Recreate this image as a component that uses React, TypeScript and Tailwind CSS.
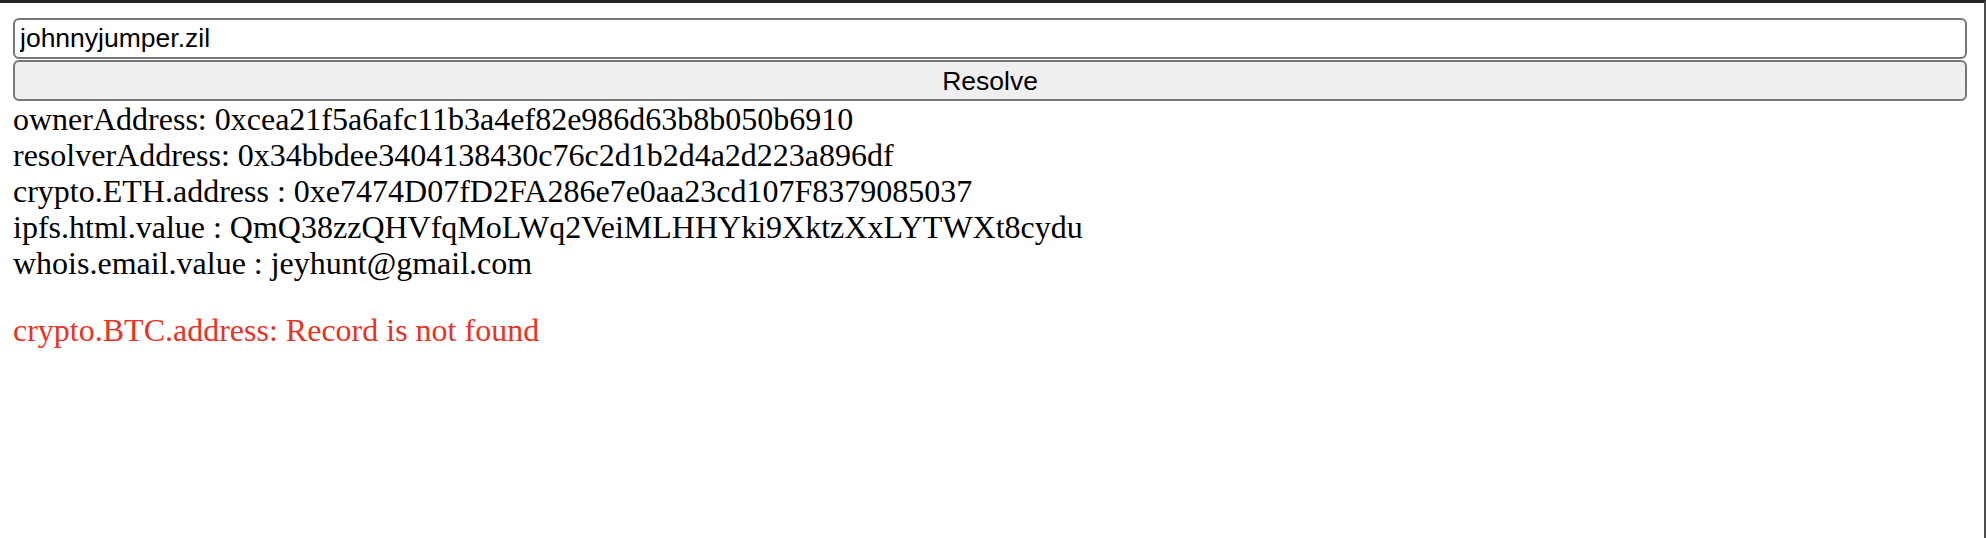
import React from 'react';

const records: { label: string; value: string }[] = [
  { label: 'ownerAddress: ', value: '0xcea21f5a6afc11b3a4ef82e986d63b8b050b6910' },
  { label: 'resolverAddress: ', value: '0x34bbdee3404138430c76c2d1b2d4a2d223a896df' },
  { label: 'crypto.ETH.address : ', value: '0xe7474D07fD2FA286e7e0aa23cd107F8379085037' },
  { label: 'ipfs.html.value : ', value: 'QmQ38zzQHVfqMoLWq2VeiMLHHYki9XktzXxLYTWXt8cydu' },
  { label: 'whois.email.value : ', value: 'jeyhunt@gmail.com' },
];

export default function App() {
  return (
    <div className="h-[538px] w-full overflow-hidden bg-white border-t-[3px] border-t-[#262626] border-r-2 border-r-[#4d4d4d]">
      <div className="pl-[13px] pr-[17px] pt-[15px]">
        {/* domain input */}
        <input
          type="text"
          defaultValue="johnnyjumper.zil"
          className="block h-[41px] w-full rounded-[6px] border-2 border-[#767676] bg-white pl-[5px] text-[26.5px] text-black outline-none font-['Liberation_Sans',Arial,sans-serif]"
        />
        <button
          type="button"
          className="mt-[1px] block h-[41px] w-full rounded-[6px] border-2 border-[#767676] bg-[#efefef] text-[26.5px] text-black font-['Liberation_Sans',Arial,sans-serif]"
        >
          Resolve
        </button>

        {/* resolved records */}
        <div className="text-[32px] leading-[36px] text-black font-['Liberation_Serif','Times_New_Roman',serif]">
          {records.map((r) => (
            <div key={r.label} className="whitespace-nowrap">
              {r.label}
              {r.value}
            </div>
          ))}
          <p className="mt-[31px] text-[#ea3323] whitespace-nowrap">
            crypto.BTC.address: Record is not found
          </p>
        </div>
      </div>
    </div>
  );
}
